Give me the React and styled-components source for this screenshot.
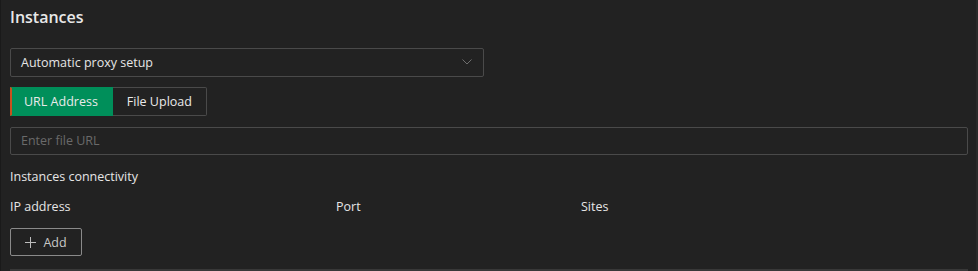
import React from "react";
import styled, { createGlobalStyle } from "styled-components";

const Global = createGlobalStyle`
  html, body { margin: 0; padding: 0; background: #222222; }
  body { font-family: "Open Sans", "Noto Sans", sans-serif; color: #e6e6e6; }
  * { box-sizing: border-box; }
`;

const Panel = styled.div`
  width: 978px;
  height: 271px;
  background: #222222;
  border-left: 1px solid #1a1a1a;
  border-right: 2px solid #2a2a2a;
  padding: 4px 9px 0 9px;
  display: flex;
  flex-direction: column;
`;

const Title = styled.h2`
  margin: 0;
  font-size: 16px;
  font-weight: 600;
  line-height: 26px;
  color: #e8e8e8;
`;

const Select = styled.div`
  margin-top: 18px;
  width: 474px;
  height: 29px;
  border: 1px solid #4a4a4a;
  border-radius: 2px;
  display: flex;
  align-items: center;
  justify-content: space-between;
  padding: 0 10px 0 10px;
  font-size: 12.5px;
  color: #e6e6e6;
`;

const Tabs = styled.div`
  margin-top: 10px;
  display: flex;
`;

const Tab = styled.button`
  height: 29px;
  padding: 0 14px 0 ${p => (p.$active ? "12px" : "14px")};
  font-family: inherit;
  font-size: 12.5px;
  color: #eaeaea;
  background: ${p => (p.$active ? "#008f5a" : "transparent")};
  border: 1px solid ${p => (p.$active ? "#008f5a" : "#4a4a4a")};
  border-left: ${p => (p.$active ? "2px solid #c9501f" : "none")};
  border-radius: 0 ${p => (p.$active ? "0 0" : "2px 2px")} 0;
  cursor: pointer;
`;

const Input = styled.input`
  margin-top: 11px;
  width: 958px;
  height: 29px;
  background: transparent;
  border: 1px solid #4a4a4a;
  border-radius: 2px;
  padding: 0 10px;
  font-family: inherit;
  font-size: 12.5px;
  color: #e6e6e6;
  outline: none;
  &::placeholder { color: #6a6a6a; }
`;

const Label = styled.div`
  margin-top: 13px;
  font-size: 12.5px;
  line-height: 18px;
  color: #e6e6e6;
`;

const HeaderRow = styled.div`
  margin-top: 12px;
  display: grid;
  grid-template-columns: 326px 245px 1fr;
  font-size: 12.5px;
  line-height: 18px;
  color: #e6e6e6;
`;

const AddButton = styled.button`
  margin-top: 12px;
  width: 72px;
  height: 28px;
  display: flex;
  align-items: center;
  justify-content: center;
  gap: 7px;
  background: transparent;
  border: 1px solid #8a8a8a;
  border-radius: 2px;
  font-family: inherit;
  font-size: 12.5px;
  color: #c8c8c8;
  cursor: pointer;
`;

const Divider = styled.div`
  margin-top: 13px;
  width: 958px;
  height: 2px;
  background: #383838;
`;

const Chevron = () => (
  <svg width="10" height="6" viewBox="0 0 10 6" fill="none" style={{ marginRight: 1 }}>
    <path d="M0.5 0.5 L5 5 L9.5 0.5" stroke="#6e6e6e" strokeWidth="1" />
  </svg>
);

const Plus = () => (
  <svg width="11" height="11" viewBox="0 0 11 11" fill="none">
    <path d="M5.5 0 V11 M0 5.5 H11" stroke="#bdbdbd" strokeWidth="1" />
  </svg>
);

export default function App() {
  return (
    <>
      <Global />
      <Panel>
        <Title>Instances</Title>
        <Select>
          <span>Automatic proxy setup</span>
          <Chevron />
        </Select>
        <Tabs>
          <Tab $active>URL Address</Tab>
          <Tab>File Upload</Tab>
        </Tabs>
        <Input placeholder="Enter file URL" />
        <Label>Instances connectivity</Label>
        <HeaderRow>
          <span>IP address</span>
          <span>Port</span>
          <span>Sites</span>
        </HeaderRow>
        <AddButton>
          <Plus />
          <span>Add</span>
        </AddButton>
        <Divider />
      </Panel>
    </>
  );
}
